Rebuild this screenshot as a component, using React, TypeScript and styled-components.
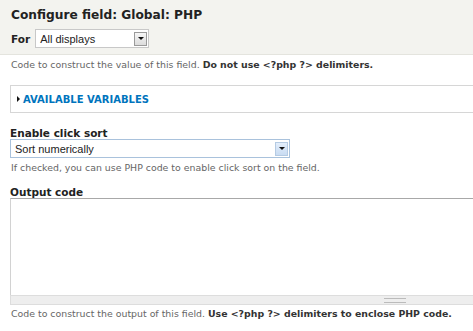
import React from "react";
import styled, { createGlobalStyle } from "styled-components";

const Global = createGlobalStyle`
  html, body { margin: 0; padding: 0; background: #fff; overflow: hidden; }
  body { font-family: "DejaVu Sans", Verdana, sans-serif; color: #333; }
`;

const Page = styled.div`
  width: 473px;
  height: 331px;
  overflow: hidden;
`;

const Header = styled.div`
  background: #f3f3ef;
  border-bottom: 1px solid #e4e4de;
  padding: 8px 11px 0 11px;
  height: 46px;
  box-sizing: content-box;
`;

const Title = styled.h1`
  margin: 0;
  font-size: 12.2px;
  font-weight: bold;
  color: #222;
  line-height: 14px;
`;

const ForRow = styled.div`
  display: flex;
  align-items: center;
  gap: 5px;
  margin-top: 7px;
`;

const Label = styled.label`
  display: block;
  font-size: 10.5px;
  font-weight: bold;
  color: #222;
  line-height: 12px;
`;

const SelectBox = styled.div<{ $w: number; $blue?: boolean }>`
  width: ${(p) => p.$w}px;
  height: 19px;
  box-sizing: border-box;
  border: 1px solid ${(p) => (p.$blue ? "#a9c2dc" : "#c8c8c8")};
  background: #fff;
  display: flex;
  align-items: center;
  padding: 0 1px 0 4px;
  font-family: "Liberation Sans", Arial, sans-serif;
  font-size: 11px;
  color: #222;
`;

const SelectText = styled.span`
  flex: 1;
`;

const ArrowBtn = styled.span<{ $blue?: boolean }>`
  width: 13px;
  height: 14px;
  box-sizing: border-box;
  border: 1px solid ${(p) => (p.$blue ? "#b5cbe3" : "#9a9a9a")};
  background: ${(p) =>
    p.$blue
      ? "linear-gradient(#e3eefb, #c9dcf2)"
      : "linear-gradient(#f6f6f6, #dcdcdc)"};
  display: flex;
  align-items: center;
  justify-content: center;
`;

const Tri = styled.span`
  width: 0;
  height: 0;
  border-left: 3px solid transparent;
  border-right: 3px solid transparent;
  border-top: 3px solid #111;
`;

const Body = styled.div`
  width: 780px;
  padding: 0 0 0 10px;
`;

const Desc = styled.div`
  font-size: 9.4px;
  line-height: 12px;
  color: #666;
  padding-left: 1px;
  white-space: nowrap;
  strong { color: #333; }
`;

const Fieldset = styled.div`
  border: 1px solid #d6d6d6;
  height: 28px;
  box-sizing: border-box;
  display: flex;
  align-items: center;
  padding-left: 6px;
  gap: 3px;
  margin-top: 14px;
`;

const Legend = styled.span`
  color: #0074bd;
  font-size: 10px;
  font-weight: bold;
`;

const SmallTri = styled.span`
  width: 0;
  height: 0;
  border-top: 3px solid transparent;
  border-bottom: 3px solid transparent;
  border-left: 3px solid #111;
`;

const FieldItem = styled.div<{ $mt: number }>`
  margin-top: ${(p) => p.$mt}px;
`;

const Textarea = styled.div`
  width: 770px;
  height: 97px;
  box-sizing: border-box;
  border: 1px solid #d2d2d2;
  border-top-color: #a8a8a8;
  border-bottom: none;
  background: #fff;
`;

const Grippie = styled.div`
  width: 770px;
  height: 10px;
  box-sizing: border-box;
  background: #eee;
  border: 1px solid #ddd;
  display: flex;
  justify-content: center;
  align-items: center;
`;

const Handle = styled.span`
  width: 22px;
  height: 3px;
  border-top: 1px solid #bbb;
  border-bottom: 1px solid #bbb;
`;

export default function App() {
  return (
    <Page>
      <Global />
      <Header>
        <Title>Configure field: Global: PHP</Title>
        <ForRow>
          <Label>For</Label>
          <SelectBox $w={114}>
            <SelectText>All displays</SelectText>
            <ArrowBtn>
              <Tri />
            </ArrowBtn>
          </SelectBox>
        </ForRow>
      </Header>
      <Body>
        <FieldItem $mt={4}>
          <Desc>
            Code to construct the value of this field. <strong>Do not use &lt;?php ?&gt; delimiters.</strong>
          </Desc>
        </FieldItem>
        <Fieldset>
          <SmallTri />
          <Legend>AVAILABLE VARIABLES</Legend>
        </Fieldset>
        <FieldItem $mt={14}>
          <Label>Enable click sort</Label>
          <SelectBox $w={280} $blue>
            <SelectText>Sort numerically</SelectText>
            <ArrowBtn $blue>
              <Tri />
            </ArrowBtn>
          </SelectBox>
          <FieldItem $mt={4}>
            <Desc>If checked, you can use PHP code to enable click sort on the field.</Desc>
          </FieldItem>
        </FieldItem>
        <FieldItem $mt={12}>
          <Label>Output code</Label>
          <Textarea />
          <Grippie>
            <Handle />
          </Grippie>
          <FieldItem $mt={3}>
            <Desc>
              Code to construct the output of this field. <strong>Use &lt;?php ?&gt; delimiters to enclose PHP code.</strong>
            </Desc>
          </FieldItem>
        </FieldItem>
      </Body>
    </Page>
  );
}
